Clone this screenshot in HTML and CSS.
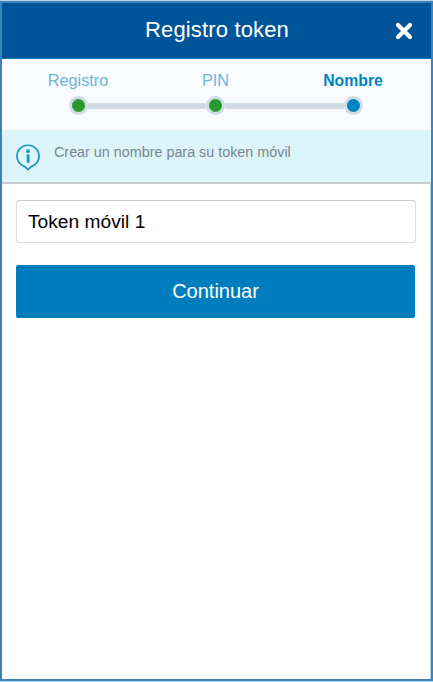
FILE: index.html
```html
<!DOCTYPE html>
<html lang="es">
<head>
<meta charset="utf-8">
<title>Registro token</title>
<link rel="stylesheet" href="styles.css">
</head>
<body>
<main class="screen">
  <header class="header">
    <h1 class="title">Registro token</h1>
    <button class="close" type="button" aria-label="Cerrar">
      <svg width="18" height="18" viewBox="0 0 18 18"><path d="M3 3L15 15M15 3L3 15" stroke="#fff" stroke-width="4.2" stroke-linecap="round" fill="none"/></svg>
    </button>
  </header>
  <ol class="steps">
    <li class="step"><span class="label">Registro</span><span class="dot"></span></li>
    <li class="step"><span class="label">PIN</span><span class="dot"></span></li>
    <li class="step current"><span class="label">Nombre</span><span class="dot"></span></li>
  </ol>
  <section class="notice">
    <svg class="info" width="26" height="28" viewBox="0 0 26 28">
      <path d="M9.2 22.2A11 10.8 0 1 1 16.8 22.2L13 25.6Z" fill="none" stroke="#1592c5" stroke-width="1.7" stroke-linejoin="round"/>
      <circle cx="13" cy="7.2" r="1.9" fill="#1592c5"/>
      <path d="M11.3 10.4H14.5V18.8H11.7V11.6H11.3Z" fill="#1592c5"/>
    </svg>
    <p class="message">Crear un nombre para su token móvil</p>
  </section>
  <form class="form">
    <input class="field" type="text" value="Token móvil 1" aria-label="Nombre">
    <button class="submit" type="button">Continuar</button>
  </form>
</main>
</body>
</html>
```
FILE: styles.css
```css
* {
  box-sizing: border-box;
}

body {
  margin: 0;
  background: #bad4e6;
  font-family: "Liberation Sans", Arial, sans-serif;
}

.screen {
  height: 682px;
  display: flex;
  flex-direction: column;
  background: #fff;
  border: 2px solid #3c82bb;
  border-top-width: 3px;
  border-bottom-width: 3px;
  box-shadow: inset -1px 0 #b9d3e7;
  clip-path: inset(1px 0 1px 0);
}

.header {
  height: 56px;
  flex: none;
  display: grid;
  grid-template-columns: 50px 1fr 50px;
  align-items: center;
  background: #005499;
  border-bottom: 1px solid #0879b8;
}

.title {
  grid-column: 2;
  margin: 0;
  padding: 0 0 2px 1px;
  color: #fff;
  font-size: 22px;
  font-weight: 400;
  letter-spacing: 0.15px;
  text-align: center;
}

.close {
  display: flex;
  padding: 0 0 0 14px;
  border: 0;
  background: none;
}

.steps {
  height: 71px;
  flex: none;
  display: grid;
  grid-template-columns: repeat(3, 137.5px);
  justify-content: center;
  margin: 0;
  padding: 11px 2px 0 0;
  list-style: none;
  background: #fafbfe;
}

.step {
  display: grid;
  grid-template-columns: 1fr 19px 1fr;
  grid-template-rows: 21px 19px;
  row-gap: 5px;
  align-content: start;
  align-items: center;
}

.label {
  grid-column: 1 / -1;
  color: #69b7d8;
  font-size: 16.3px;
  text-align: center;
}

.step::before,
.step::after {
  content: "";
  grid-row: 2;
  height: 6px;
  background: #cfdbe5;
}

.step::before {
  grid-column: 1;
}

.step::after {
  grid-column: 3;
}

.step:first-child::before,
.step:last-child::after {
  visibility: hidden;
}

.dot {
  grid-row: 2;
  grid-column: 2;
  width: 19px;
  height: 19px;
  border: 3px solid #cfdbe5;
  border-radius: 50%;
  background: #289a2d;
}

.current .label {
  color: #0083c1;
  font-size: 15.8px;
  font-weight: 700;
}

.current .dot {
  background: #0083c1;
}

.notice {
  height: 54px;
  flex: none;
  display: flex;
  align-items: flex-start;
  gap: 13px;
  padding: 14px 13px 0;
  background: #dcf5fa;
  border-bottom: 2px solid #c8cfd2;
}

.info {
  flex: none;
}

.message {
  margin: 0;
  color: #78868f;
  font-size: 14.35px;
  line-height: 17px;
}

.form {
  display: flex;
  flex-direction: column;
  gap: 22px;
  padding: 16px 15px 0 14px;
}

.field {
  width: 100%;
  height: 43px;
  padding: 0 11px;
  border: 1px solid #dedede;
  border-top-color: #cbcbcb;
  border-radius: 3px;
  background: #fff;
  color: #000;
  font: 19.2px "Liberation Sans", Arial, sans-serif;
}

.submit {
  height: 53px;
  margin-right: 1px;
  padding: 0;
  border: 0;
  border-radius: 2px;
  background: #007dbd;
  color: #fff;
  font: 20px "Liberation Sans", Arial, sans-serif;
}
```
